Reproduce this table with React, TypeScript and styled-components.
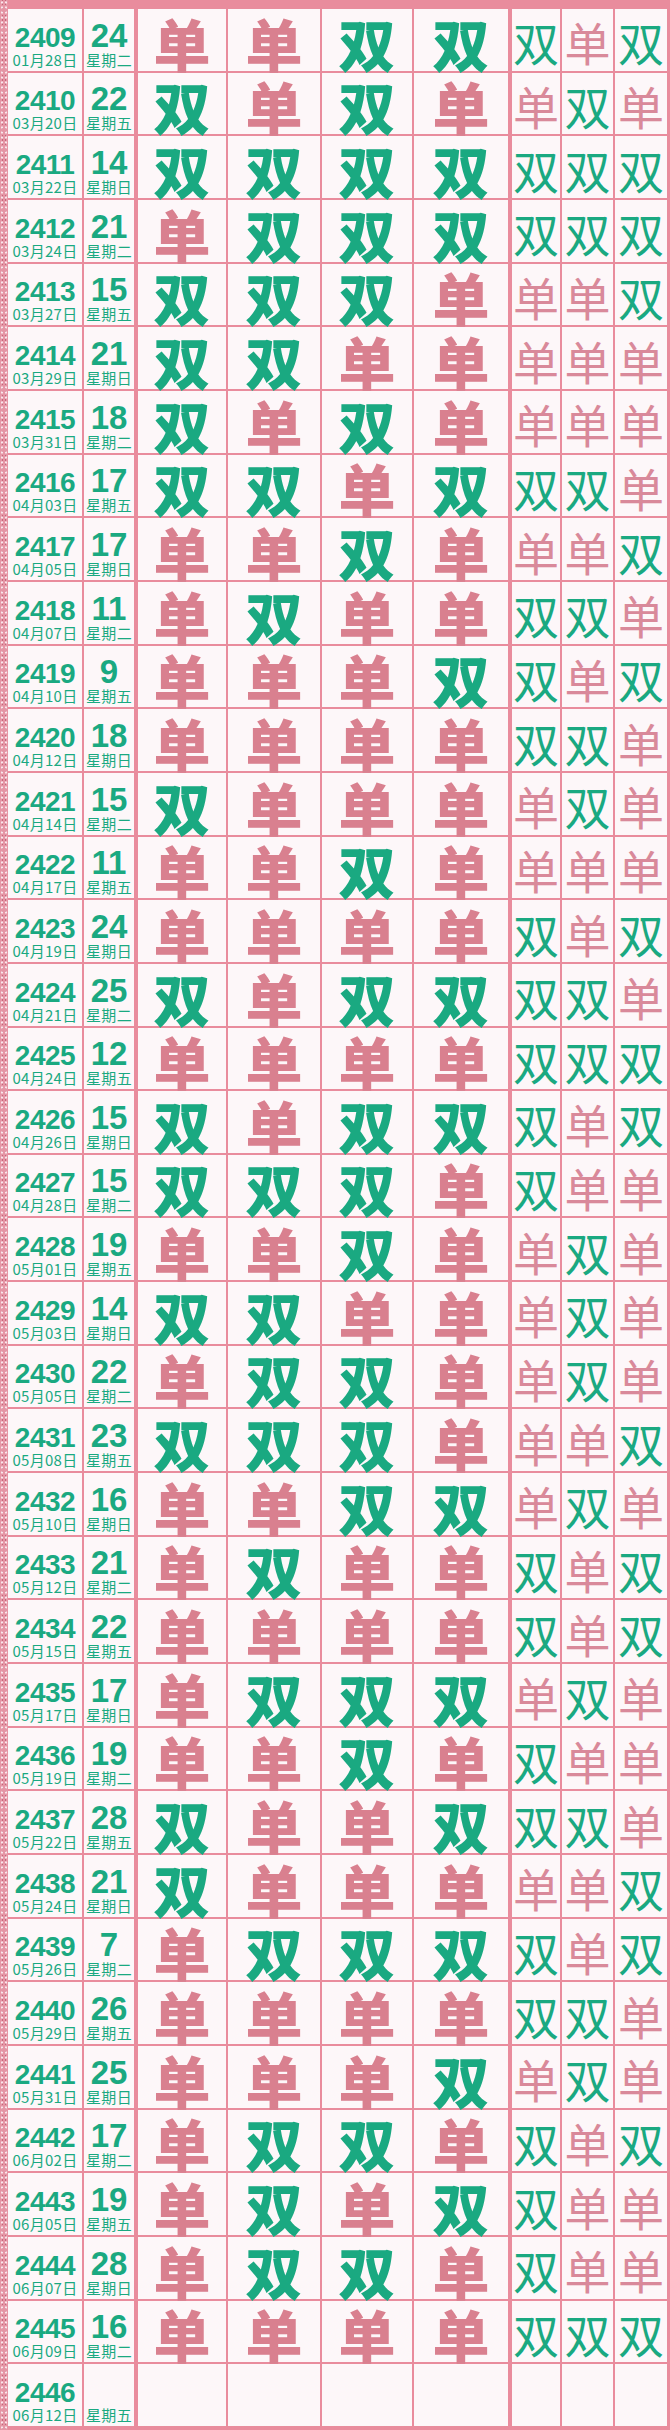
import React from "react"
import styled, { createGlobalStyle } from "styled-components"

const LINE = "#e98c9d"
const GREEN = "#1aa981"
const PINK = "#d9808f"
const PAPER = "#fdf7f9"

// issue | number | date | weekday | 4 big marks | 3 small marks
const rows = `
2409|24|01月28日|星期二|单单双双|双单双
2410|22|03月20日|星期五|双单双单|单双单
2411|14|03月22日|星期日|双双双双|双双双
2412|21|03月24日|星期二|单双双双|双双双
2413|15|03月27日|星期五|双双双单|单单双
2414|21|03月29日|星期日|双双单单|单单单
2415|18|03月31日|星期二|双单双单|单单单
2416|17|04月03日|星期五|双双单双|双双单
2417|17|04月05日|星期日|单单双单|单单双
2418|11|04月07日|星期二|单双单单|双双单
2419|9|04月10日|星期五|单单单双|双单双
2420|18|04月12日|星期日|单单单单|双双单
2421|15|04月14日|星期二|双单单单|单双单
2422|11|04月17日|星期五|单单双单|单单单
2423|24|04月19日|星期日|单单单单|双单双
2424|25|04月21日|星期二|双单双双|双双单
2425|12|04月24日|星期五|单单单单|双双双
2426|15|04月26日|星期日|双单双双|双单双
2427|15|04月28日|星期二|双双双单|双单单
2428|19|05月01日|星期五|单单双单|单双单
2429|14|05月03日|星期日|双双单单|单双单
2430|22|05月05日|星期二|单双双单|单双单
2431|23|05月08日|星期五|双双双单|单单双
2432|16|05月10日|星期日|单单双双|单双单
2433|21|05月12日|星期二|单双单单|双单双
2434|22|05月15日|星期五|单单单单|双单双
2435|17|05月17日|星期日|单双双双|单双单
2436|19|05月19日|星期二|单单双单|双单单
2437|28|05月22日|星期五|双单单双|双双单
2438|21|05月24日|星期日|双单单单|单单双
2439|7|05月26日|星期二|单双双双|双单双
2440|26|05月29日|星期五|单单单单|双双单
2441|25|05月31日|星期日|单单单双|单双单
2442|17|06月02日|星期二|单双双单|双单双
2443|19|06月05日|星期五|单双单双|双单单
2444|28|06月07日|星期日|单双双单|双单单
2445|16|06月09日|星期二|单单单单|双双双
2446||06月12日|星期五||
`
  .trim()
  .split("\n")
  .map((line) => {
    const [issue, num, date, day, big, small] = line.split("|")
    return { issue, num, date, day, big: [...big], small: [...small] }
  })

const bigWidths = [88, 92, 90, 94]
const smallWidths = [48, 51, 52]

const GlobalStyle = createGlobalStyle`
  html, body {
    margin: 0;
    padding: 0;
    background: ${LINE};
  }
  body {
    font-family: "Noto Sans CJK SC", "Noto Sans", sans-serif;
  }
`

const Sheet = styled.div`
  width: 670px;
  height: 2430px;
  display: flex;
  background: ${LINE};
  overflow: hidden;
`

const Selvage = styled.div`
  width: 8px;
  flex: none;
  background-color: #e596a5;
  background-image: radial-gradient(circle, #fbe6ec 0.9px, transparent 1.3px),
    radial-gradient(circle, #c5667a 0.7px, transparent 1.1px);
  background-size: 4px 5px, 3px 4px;
  background-position: 0 0, 1px 2px;
`

const Grid = styled.div`
  flex: 1;
  display: flex;
  flex-direction: column;
  padding: 9px 3px 4px 0;
`

const Row = styled.div<{ $groupStart: boolean }>`
  flex: 1 1 0;
  min-height: 0;
  display: flex;
  & + & {
    margin-top: ${({ $groupStart }) => ($groupStart ? 5 : 2)}px;
  }
`

const Cell = styled.div<{ $w: number; $lead?: number }>`
  flex: none;
  width: ${({ $w }) => $w}px;
  margin-left: ${({ $lead = 0 }) => $lead}px;
  background: ${PAPER};
  display: flex;
  flex-direction: column;
  align-items: center;
  color: ${GREEN};
`

const InfoCell = styled(Cell)`
  justify-content: flex-end;
  padding-bottom: 3px;
  box-sizing: border-box;
`

const Issue = styled.div`
  font-family: "Liberation Sans", Arial, sans-serif;
  font-weight: 700;
  font-size: 28px;
  line-height: 26px;
  letter-spacing: -0.5px;
`

const DrawNo = styled.div`
  font-family: "Liberation Sans", Arial, sans-serif;
  font-weight: 700;
  font-size: 33px;
  line-height: 30px;
  height: 30px;
`

const Caption = styled.div`
  font-size: 15px;
  line-height: 17px;
  letter-spacing: 0.3px;
  white-space: nowrap;
`

const BigCell = styled(Cell)`
  justify-content: flex-end;
`

const BigMark = styled.div<{ $even: boolean }>`
  font-size: 57px;
  font-weight: 900;
  line-height: 57px;
  color: ${({ $even }) => ($even ? GREEN : PINK)};
`

const SmallCell = styled(Cell)`
  justify-content: center;
`

const SmallMark = styled.div<{ $even: boolean }>`
  font-size: 46px;
  font-weight: 400;
  line-height: 46px;
  margin-top: 3px;
  color: ${({ $even }) => ($even ? GREEN : "#d9899a")};
`

export default function App() {
  return (
    <>
      <GlobalStyle />
      <Sheet>
        <Selvage />
        <Grid>
          {rows.map((r, i) => (
            <Row key={r.issue} $groupStart={i % 4 === 0}>
              <InfoCell $w={74}>
                <Issue>{r.issue}</Issue>
                <Caption>{r.date}</Caption>
              </InfoCell>
              <InfoCell $w={50} $lead={2}>
                <DrawNo>{r.num}</DrawNo>
                <Caption>{r.day}</Caption>
              </InfoCell>
              {bigWidths.map((w, j) => (
                <BigCell key={j} $w={w} $lead={j === 0 ? 4 : 2}>
                  {r.big[j] && <BigMark $even={r.big[j] === "双"}>{r.big[j]}</BigMark>}
                </BigCell>
              ))}
              {smallWidths.map((w, j) => (
                <SmallCell key={j} $w={w} $lead={j === 0 ? 4 : 2}>
                  {r.small[j] && <SmallMark $even={r.small[j] === "双"}>{r.small[j]}</SmallMark>}
                </SmallCell>
              ))}
            </Row>
          ))}
        </Grid>
      </Sheet>
    </>
  )
}
